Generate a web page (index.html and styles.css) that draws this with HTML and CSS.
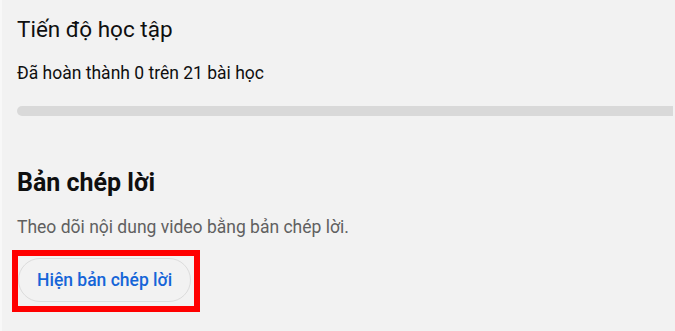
FILE: index.html
```html
<!DOCTYPE html>
<html lang="vi">
<head>
<meta charset="utf-8">
<link rel="stylesheet" href="styles.css">
</head>
<body>
<div class="page">
  <section class="progress">
    <h2 class="title">Tiến độ học tập</h2>
    <p class="count">Đã hoàn thành 0 trên 21 bài học</p>
    <div class="bar"></div>
  </section>
  <section class="transcript">
    <h2 class="title2">Bản chép lời</h2>
    <p class="desc">Theo dõi nội dung video bằng bản chép lời.</p>
    <div class="highlight">
      <button class="btn">Hiện bản chép lời</button>
    </div>
  </section>
</div>
</body>
</html>
```

FILE: styles.css
```css
html, body {
  margin: 0;
  padding: 0;
  background: #f2f2f2;
}
body {
  font-family: Roboto, "Noto Sans", Arial, sans-serif;
  color: #0f0f0f;
}
.page {
  width: 675px;
  height: 331px;
  box-sizing: border-box;
  border-left: 2px solid #f8f8f8;
  padding: 0 0 0 15px;
  overflow: hidden;
}
.title {
  margin: 0;
  padding-top: 15px;
  font-size: 22.5px;
  font-weight: 400;
  line-height: 28px;
}
.count {
  margin: 18px 0 0;
  font-size: 17.5px;
  line-height: 24px;
}
.bar {
  margin-top: 21px;
  height: 10px;
  width: 656px;
  background: #d9d9d9;
  border-radius: 5px 0 0 5px;
}
.transcript {
  margin-top: 52px;
}
.title2 {
  margin: 0;
  font-size: 25px;
  font-weight: 700;
  line-height: 30px;
}
.desc {
  margin: 17px 0 0;
  font-size: 17.5px;
  line-height: 24px;
  color: #606060;
}
.highlight {
  display: inline-block;
  margin: 11px 0 0 -5px;
  border: 6px solid #ff0000;
  padding: 2px 3px 4px 0;
}
.btn {
  display: block;
  height: 44px;
  padding: 0 18px;
  border: 1px solid #dcdcdc;
  border-radius: 22px;
  background: #f2f2f2;
  color: #1565d8;
  font-family: Roboto, "Noto Sans", Arial, sans-serif;
  font-size: 17.5px;
  font-weight: 500;
}
```
